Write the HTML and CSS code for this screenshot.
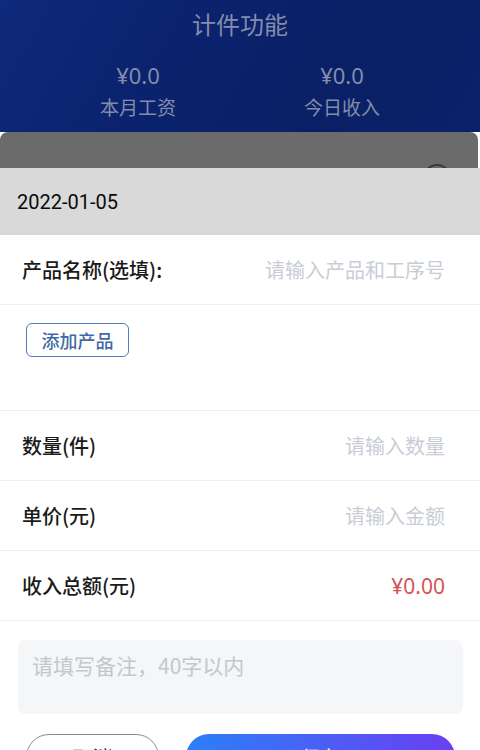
FILE: index.html
```html
<!DOCTYPE html>
<html lang="zh">
<head>
<meta charset="utf-8">
<link rel="stylesheet" href="styles.css">
</head>
<body>
<div class="page">
  <header class="hero">
    <div class="hero-title">计件功能</div>
    <div class="stats">
      <div class="stat"><div class="stat-val">¥0.0</div><div class="stat-label">本月工资</div></div>
      <div class="stat"><div class="stat-val">¥0.0</div><div class="stat-label">今日收入</div></div>
    </div>
  </header>
  <div class="sheet-head"><span class="close-ring"></span></div>
  <div class="date-bar">2022-01-05</div>
  <div class="form">
    <div class="row"><span class="label">产品名称(选填):</span><span class="ph">请输入产品和工序号</span></div>
    <div class="add-area"><button class="add-btn">添加产品</button></div>
    <div class="row"><span class="label">数量(件)</span><span class="ph">请输入数量</span></div>
    <div class="row"><span class="label">单价(元)</span><span class="ph">请输入金额</span></div>
    <div class="row"><span class="label">收入总额(元)</span><span class="total">¥0.00</span></div>
    <div class="remark">请填写备注，40字以内</div>
    <div class="actions">
      <button class="btn cancel">取消</button>
      <button class="btn save">保存</button>
    </div>
  </div>
</div>
</body>
</html>
```
FILE: styles.css
```css
* { box-sizing: border-box; margin: 0; padding: 0; }
html, body { width: 480px; height: 750px; overflow: hidden; }
body { font-family: "Noto Sans CJK SC", "Noto Sans", sans-serif; background: #fff; color: #1a1a1a; }
.page { width: 480px; }
.hero {
  height: 132px;
  background: linear-gradient(120deg, #0e2a7a 0%, #0b236e 35%, #0a2066 70%, #0a226a 100%);
  color: #838dab;
  text-align: center;
  padding-top: 6px;
}
.hero-title { font-size: 24px; line-height: 36px; }
.stats { display: flex; padding: 18px 36px 0 36px; }
.stat { flex: 1; display: flex; flex-direction: column; align-items: center; }
.stat-val { font-size: 22px; line-height: 30px; font-family: "Noto Sans", sans-serif; }
.stat-label { font-size: 19px; line-height: 34px; }
.sheet-head {
  height: 36px;
  background: #6b6b6b;
  border-radius: 8px 8px 0 0;
  margin-right: 2px;
  position: relative;
  overflow: hidden;
}
.close-ring {
  position: absolute;
  left: 423px;
  top: 32px;
  width: 28px;
  height: 28px;
  border: 2px solid #333a45;
  border-radius: 50%;
}
.date-bar {
  height: 67px;
  background: #d9d9d9;
  font-size: 20px;
  font-weight: 400;
  color: #0a0a0a;
  padding-left: 17px;
  display: flex;
  align-items: center;
  font-family: Roboto, "Noto Sans", sans-serif;
}
.form { background: #fff; }
.row {
  height: 70px;
  display: flex;
  align-items: center;
  justify-content: space-between;
  padding: 0 35px 0 22px;
  border-bottom: 1px solid #efefef;
}
.label { font-size: 20px; font-weight: 500; color: #1a1a1a; }
.ph { font-size: 20px; color: #c8cdd6; }
.total { font-size: 21px; color: #d45454; font-family: "Noto Sans", sans-serif; }
.add-area {
  height: 106px;
  padding: 18px 0 0 26px;
  border-bottom: 1px solid #efefef;
}
.add-btn {
  font-family: inherit;
  width: 103px;
  height: 34px;
  border: 1.5px solid #4f7cb8;
  border-radius: 6px;
  background: #fff;
  color: #3e6aa6;
  font-size: 18px;
  font-weight: 500;
  line-height: 1;
}
.remark {
  margin: 19px 17px 0 18px;
  height: 74px;
  background: #f5f6f7;
  border-radius: 8px;
  padding: 10px 14px;
  font-size: 21px;
  line-height: 30px;
  color: #c3c6cc;
}
.actions {
  display: flex;
  gap: 27px;
  padding: 20px 25px 0 26px;
}
.btn {
  font-family: inherit;
  height: 46px;
  border-radius: 23px;
  font-size: 20px;
}
.cancel { width: 133px; background: #fff; border: 1px solid #8a8a8a; color: #333; }
.save { flex: 1; border: none; color: #fff; background: linear-gradient(90deg, #2b80f7, #6a3ff2); }
```
